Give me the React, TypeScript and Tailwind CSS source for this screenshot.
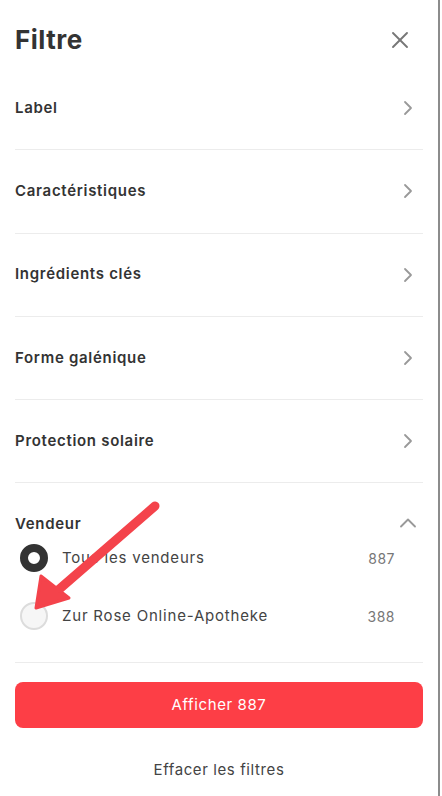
import { ChevronRight, ChevronUp, X } from "lucide-react";

const sections = [
  "Label",
  "Caractéristiques",
  "Ingrédients clés",
  "Forme galénique",
  "Protection solaire",
];

const vendors = [
  { name: "Tous les vendeurs", count: 887, checked: true },
  { name: "Zur Rose Online-Apotheke", count: 388, checked: false },
];

const App = () => {
  return (
    <div className="relative min-h-[796px] w-[442px] bg-white font-['Inter','Liberation_Sans',sans-serif] text-[#333]">
      <div className="flex min-h-[796px] w-[440px] flex-col border-r-2 border-[#8c8c8c] px-[15px]">
        <div className="flex h-[67px] items-start justify-between pt-[24px]">
          <h1 className="text-[26px] font-bold leading-[32px] tracking-[0.5px] text-[#333]">
            Filtre
          </h1>
          <X size={28} strokeWidth={1.6} className="mr-[9px] mt-[2px] text-[#777]" />
        </div>

        {sections.map((label) => (
          <div
            key={label}
            className="flex h-[83.3px] items-center justify-between border-b border-[#ececec]"
          >
            <span className="text-[15px] font-semibold tracking-[0.7px]">{label}</span>
            <ChevronRight size={24} strokeWidth={1.8} className="mr-[3px] text-[#999]" />
          </div>
        ))}

        <div className="border-b border-[#ececec] pb-[32px] pt-[28px]">
          <div className="flex items-center justify-between">
            <span className="text-[15px] font-semibold leading-[20px] tracking-[0.7px]">Vendeur</span>
            <ChevronUp size={28} strokeWidth={1.6} className="mr-[1px] -mt-[2px] text-[#999]" />
          </div>
          <div className="mt-[7px] flex flex-col gap-[30px]">
            {vendors.map((v) => (
              <div key={v.name} className="flex h-[28px] items-center pl-[5px] pr-[28px]">
                {v.checked ? (
                  <span className="h-[28px] w-[28px] rounded-full border-[8px] border-[#333] bg-white" />
                ) : (
                  <span className="h-[28px] w-[28px] rounded-full border-2 border-[#dcdcdc] bg-[#f6f6f6]" />
                )}
                <span className="ml-[14px] flex-1 text-[15px] tracking-[0.8px] text-[#444]">{v.name}</span>
                <span className="text-[14px] tracking-[0.5px] text-[#777]">{v.count}</span>
              </div>
            ))}
          </div>
        </div>

        <button className="mt-[19px] h-[46px] w-full rounded-[8px] bg-[#fd3e46] text-[15px] tracking-[0.6px] text-white">
          Afficher 887
        </button>
        <button className="mt-[31px] text-center text-[15px] tracking-[0.6px] text-[#444]">
          Effacer les filtres
        </button>
      </div>

      <svg
        className="pointer-events-none absolute left-0 top-0"
        width="442"
        height="796"
        viewBox="0 0 442 796"
      >
        <line
          x1="155"
          y1="506"
          x2="56"
          y2="592"
          stroke="#f4434b"
          strokeWidth="9"
          strokeLinecap="round"
        />
        <polygon points="36,608 41,576 69,598" fill="#f4434b" stroke="#f4434b" strokeWidth="3" strokeLinejoin="round" />
      </svg>
    </div>
  );
};

export default App;
